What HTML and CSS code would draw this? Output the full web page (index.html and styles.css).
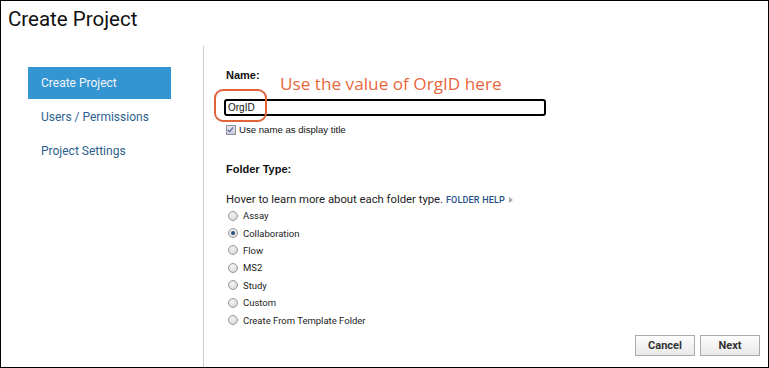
FILE: index.html
```html
<!DOCTYPE html>
<html lang="en">
<head>
    <meta charset="UTF-8">
    <title>Create Project</title>
    <link rel="stylesheet" href="styles.css">
</head>
<body>
    <div class="frame">
        <h1 class="page-title">Create Project</h1>

        <div class="main">
            <div class="sidebar">
                <a class="nav-item active">Create Project</a>
                <a class="nav-item">Users / Permissions</a>
                <a class="nav-item">Project Settings</a>
            </div>

            <div class="content">
                <p class="label">Name:</p>
                <div class="name-field">
                    <div class="name-input">OrgID</div>
                    <div class="callout-ring"></div>
                    <span class="callout-text">Use the value of OrgID here</span>
                </div>
                <label class="check-row">
                    <span class="checkbox"></span>
                    Use name as display title
                </label>

                <p class="label folder-label">Folder Type:</p>
                <p class="hint">Hover to learn more about each folder type. <span class="help-link">FOLDER HELP</span><span class="help-arrow"></span></p>

                <div class="radio-list">
                    <div class="radio-row"><span class="radio"></span>Assay</div>
                    <div class="radio-row"><span class="radio checked"></span>Collaboration</div>
                    <div class="radio-row"><span class="radio"></span>Flow</div>
                    <div class="radio-row"><span class="radio"></span>MS2</div>
                    <div class="radio-row"><span class="radio"></span>Study</div>
                    <div class="radio-row"><span class="radio"></span>Custom</div>
                    <div class="radio-row"><span class="radio"></span>Create From Template Folder</div>
                </div>

                <div class="actions">
                    <button class="btn">Cancel</button>
                    <button class="btn">Next</button>
                </div>
            </div>
        </div>
    </div>
</body>
</html>
```

FILE: styles.css
```css
*,*::before,*::after {
    box-sizing: border-box;
    margin: 0;
    padding: 0;
}

body {
    background-color: white;
    font-family: Roboto, 'Liberation Sans', sans-serif;
    color: #222;
}

.frame {
    width: 769px;
    height: 368px;
    border: 1px solid black;
    display: flex;
    flex-direction: column;
    overflow: hidden;
}

.page-title {
    font-weight: 400;
    font-size: 20.5px;
    line-height: 24px;
    padding: 6px 0 0 7px;
    height: 45px;
    color: #111;
}

.main {
    flex: 1;
    display: flex;
}

/* left navigation */
.sidebar {
    width: 203px;
    border-right: 1px solid #ccc;
    padding: 21px 0 0 27px;
    display: flex;
    flex-direction: column;
}

.nav-item {
    width: 143px;
    height: 34px;
    padding-left: 13px;
    display: flex;
    align-items: center;
    font-size: 12px;
    color: #2d5f8f;
}

.nav-item.active {
    height: 32px;
    margin-bottom: 1px;
    background-color: #3495d3;
    color: #f2f6fa;
}

/* form area */
.content {
    flex: 1;
    padding: 23px 0 0 22px;
    display: flex;
    flex-direction: column;
}

.label {
    font-family: 'Liberation Sans', Arial, sans-serif;
    font-weight: bold;
    font-size: 11px;
    line-height: 13px;
    color: #111;
}

.name-field {
    position: relative;
    margin-top: 17px;
}

.name-input {
    width: 322px;
    height: 17px;
    margin-left: -2px;
    border: 2px solid black;
    border-radius: 3px;
    font-family: 'Liberation Sans', Arial, sans-serif;
    font-size: 10px;
    line-height: 13px;
    padding-left: 2px;
    color: #111;
}

.callout-ring {
    position: absolute;
    left: -12px;
    top: -10px;
    width: 53px;
    height: 33px;
    border: 2px solid #e0633a;
    border-radius: 9px;
}

.callout-text {
    position: absolute;
    left: 54px;
    top: -25px;
    font-family: 'Open Sans', sans-serif;
    font-size: 17.2px;
    line-height: 20px;
    color: #e8683c;
    white-space: nowrap;
}

.check-row {
    display: flex;
    align-items: center;
    gap: 3px;
    margin-top: 8px;
    font-family: 'Liberation Sans', Arial, sans-serif;
    font-size: 9.6px;
    color: #111;
}

.checkbox {
    width: 10px;
    height: 10px;
    border: 1px solid #8f8f9d;
    background: linear-gradient(#e8e8f0, #c9cbd6);
    position: relative;
}

.checkbox::after {
    content: "";
    position: absolute;
    left: 2px;
    top: 0px;
    width: 3px;
    height: 6px;
    border: solid #4a5a9a;
    border-width: 0 1.5px 1.5px 0;
    transform: rotate(40deg);
}

.folder-label {
    margin-top: 28px;
}

.hint {
    margin-top: 17px;
    font-size: 11.3px;
    line-height: 14px;
    color: #222;
}

.help-link {
    font-size: 9px;
    font-weight: 500;
    color: #1f4f86;
    letter-spacing: 0.2px;
}

.help-arrow {
    display: inline-block;
    margin-left: 4px;
    width: 0;
    height: 0;
    border-left: 4px solid #aaa;
    border-top: 3.5px solid transparent;
    border-bottom: 3.5px solid transparent;
}

.radio-list {
    margin-top: 0;
    display: flex;
    flex-direction: column;
}

.radio-row {
    display: flex;
    align-items: center;
    height: 17.4px;
    gap: 5px;
    padding-left: 2px;
    font-size: 9.5px;
    color: #222;
}

.radio {
    width: 10px;
    height: 10px;
    border-radius: 50%;
    border: 1px solid #9a9a9a;
    background: radial-gradient(circle at 40% 35%, #f4f4f4, #cfcfcf);
    position: relative;
}

.radio.checked::after {
    content: "";
    position: absolute;
    left: 2px;
    top: 2px;
    width: 4px;
    height: 4px;
    border-radius: 50%;
    background: #2c4f7a;
}

.actions {
    margin-top: auto;
    margin-bottom: 11px;
    margin-right: 8px;
    display: flex;
    justify-content: flex-end;
    gap: 5px;
}

.btn {
    width: 60px;
    height: 21px;
    border: 1px solid #aaa;
    background: linear-gradient(#fdfdfd, #e9e9e9);
    font-family: Roboto, sans-serif;
    font-weight: bold;
    font-size: 11px;
    color: #333;
}
```
